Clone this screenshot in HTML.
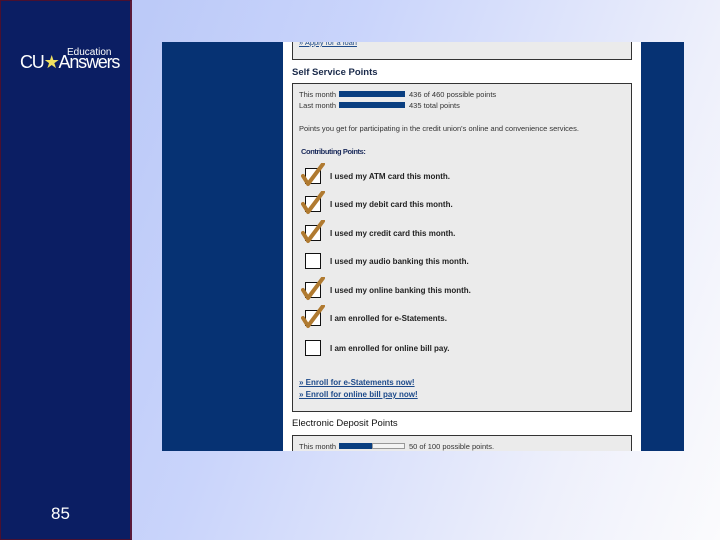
<!DOCTYPE html>
<html><head><style>
*{margin:0;padding:0;box-sizing:border-box}
body{width:720px;height:540px;overflow:hidden;position:relative;font-family:"Liberation Sans",sans-serif;background:linear-gradient(110deg,#b3c3f6 0%,#c9d4fb 40%,#eef0fb 80%,#fbfbfd 100%)}
.left{position:absolute;left:0;top:0;width:132px;height:540px;background:#0b1e63;border:1px solid #4a1030;border-right:2px solid #5a1a3a}
.logo{position:absolute;left:19px;top:45px;color:#fff}
.num{position:absolute;left:50px;top:503px;color:#fff;font-size:17px}
.shot{position:absolute;left:162px;top:42px;width:522px;height:409px;background:#063273;overflow:hidden}
.page{position:absolute;left:121px;top:0;width:358px;height:409px;background:#fff}
.box{position:absolute;left:9px;width:340px;background:#ebebeb;border:1px solid #333}
.h{position:absolute;left:9px;font-size:9.5px;font-weight:bold;color:#1a2a4a}
.t{position:absolute;font-size:7.5px;color:#333;white-space:nowrap}
.bar{position:absolute;height:6px;background:#0a3f80}
.cb{position:absolute;left:12px;width:16px;height:16px;background:#fff;border:1px solid #111}
.ck{position:absolute;left:8px}
.lbl{position:absolute;left:37px;font-size:8px;font-weight:bold;color:#222}
.lnk{position:absolute;left:6px;font-size:8px;font-weight:bold;color:#1d4a8a;text-decoration:underline}
</style></head><body>
<div class="left">
<div class="logo"><span style="position:absolute;left:47px;top:1px;font-size:10px;font-weight:300">Education</span><span style="position:absolute;left:0;top:6px;font-size:18px;letter-spacing:-1.2px;white-space:nowrap">CU<span style="color:#f0e060">★</span>Answers</span></div>
<div class="num">85</div>
</div>
<svg width="0" height="0" style="position:absolute"><defs><g id="c"><path d="M2 13 L7 21 L22 1" fill="none" stroke="#b07a30" stroke-width="4" stroke-linecap="round" stroke-linejoin="round"/></g></defs></svg>
<div class="shot"><div class="page">
<div class="box" style="top:-5px;height:23px"><div class="t" style="left:6px;top:0;color:#1d4a8a;text-decoration:underline">» Apply for a loan</div></div>
<div class="h" style="top:25px">Self Service Points</div>
<div class="box" style="top:41px;height:329px">
<div class="t" style="left:6px;top:6px">This month</div><div class="bar" style="left:46px;top:7px;width:66px"></div><div class="t" style="left:116px;top:6px">436 of 460 possible points</div>
<div class="t" style="left:6px;top:17px">Last month</div><div class="bar" style="left:46px;top:18px;width:66px"></div><div class="t" style="left:116px;top:17px">435 total points</div>
<div class="t" style="left:6px;top:40px">Points you get for participating in the credit union's online and convenience services.</div>
<div class="t" style="left:8px;top:63px;color:#1a2a5a;font-weight:bold;letter-spacing:-.4px">Contributing Points:</div>
<div class="cb" style="top:84px"></div><svg class="ck" style="top:79px" width="24" height="24"><use href="#c"/></svg><div class="lbl" style="top:88px">I used my ATM card this month.</div>
<div class="cb" style="top:112px"></div><svg class="ck" style="top:107px" width="24" height="24"><use href="#c"/></svg><div class="lbl" style="top:116px">I used my debit card this month.</div>
<div class="cb" style="top:141px"></div><svg class="ck" style="top:136px" width="24" height="24"><use href="#c"/></svg><div class="lbl" style="top:145px">I used my credit card this month.</div>
<div class="cb" style="top:169px"></div><div class="lbl" style="top:173px">I used my audio banking this month.</div>
<div class="cb" style="top:198px"></div><svg class="ck" style="top:193px" width="24" height="24"><use href="#c"/></svg><div class="lbl" style="top:202px">I used my online banking this month.</div>
<div class="cb" style="top:226px"></div><svg class="ck" style="top:221px" width="24" height="24"><use href="#c"/></svg><div class="lbl" style="top:230px">I am enrolled for e-Statements.</div>
<div class="cb" style="top:256px"></div><div class="lbl" style="top:260px">I am enrolled for online bill pay.</div>
<div class="lnk" style="top:294px">» Enroll for e-Statements now!</div>
<div class="lnk" style="top:306px">» Enroll for online bill pay now!</div>
</div>
<div class="h" style="top:376px;font-weight:normal;color:#111">Electronic Deposit Points</div>
<div class="box" style="top:393px;height:30px;border-bottom:none">
<div class="t" style="left:6px;top:6px">This month</div><div class="bar" style="left:46px;top:7px;width:33px"></div><div style="position:absolute;left:79px;top:7px;width:33px;height:6px;background:#f4f4f4;border:1px solid #999"></div><div class="t" style="left:116px;top:6px">50 of 100 possible points.</div>
</div>
</div></div>
</body></html>
